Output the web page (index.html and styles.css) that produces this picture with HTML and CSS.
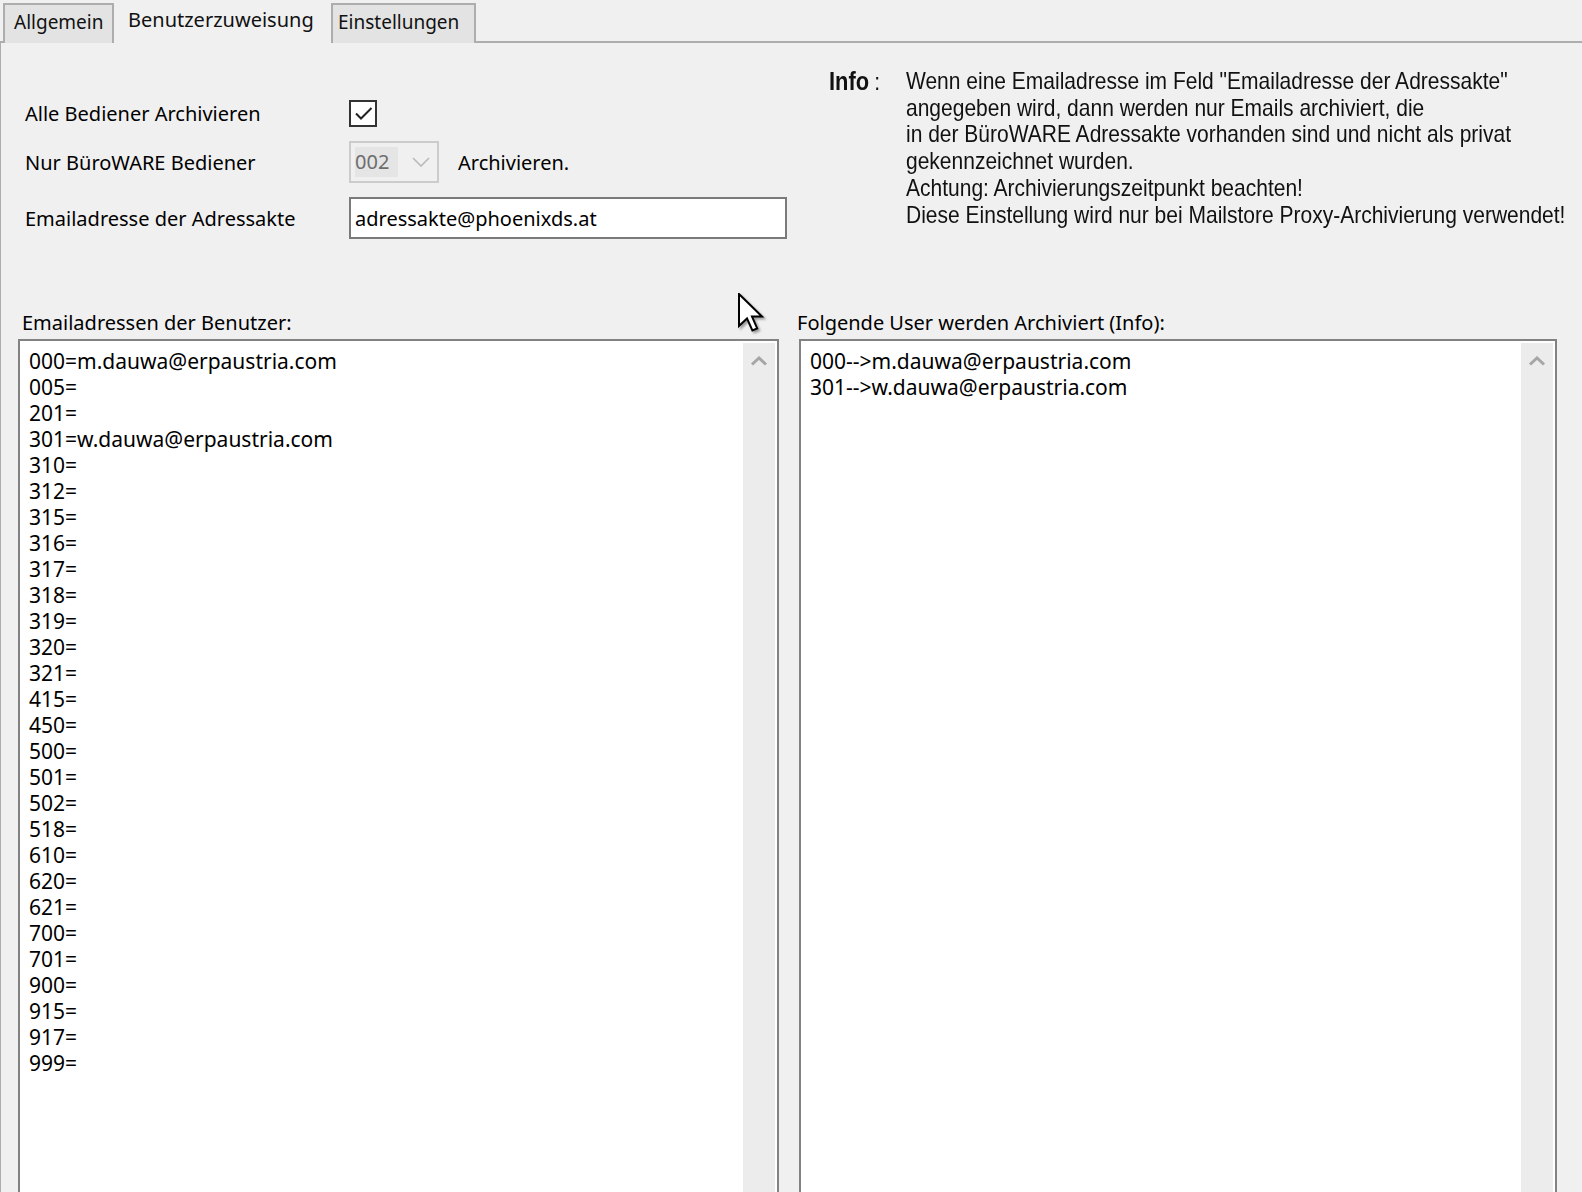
FILE: index.html
```html
<!DOCTYPE html>
<html lang="de">
<head>
<meta charset="utf-8">
<title>Benutzerzuweisung</title>
<link rel="stylesheet" href="styles.css">
</head>
<body>
<div class="tabs">
  <div class="tab tab-first">Allgemein</div>
  <div class="tab tab-active">Benutzerzuweisung</div>
  <div class="tab tab-last">Einstellungen</div>
</div>
<div class="panel">
  <div class="top">
    <div class="form">
      <div class="row">
        <span class="label">Alle Bediener Archivieren</span>
        <span class="check">
          <svg width="23" height="23" viewBox="0 0 23 23"><path d="M4 11.5 L9 16.5 L19.5 6" fill="none" stroke="#222" stroke-width="2"/></svg>
        </span>
      </div>
      <div class="row row-combo">
        <span class="label">Nur BüroWARE Bediener</span>
        <span class="combo">
          <span class="combo-val">002</span>
          <svg class="combo-arrow" width="18" height="10" viewBox="0 0 18 10"><path d="M1 1 L9 9 L17 1" fill="none" stroke="#b9b9b9" stroke-width="1.6"/></svg>
        </span>
        <span class="after">Archivieren.</span>
      </div>
      <div class="row row-input">
        <span class="label">Emailadresse der Adressakte</span>
        <span class="input">adressakte@phoenixds.at</span>
      </div>
    </div>
    <div class="info">
      <div class="info-head"><b>Info</b><span class="colon">:</span></div>
      <div class="info-text">Wenn eine Emailadresse im Feld "Emailadresse der Adressakte"<br>angegeben wird, dann werden nur Emails archiviert, die<br>in der BüroWARE Adressakte vorhanden sind und nicht als privat<br>gekennzeichnet wurden.<br>Achtung: Archivierungszeitpunkt beachten!<br>Diese Einstellung wird nur bei Mailstore Proxy-Archivierung verwendet!</div>
    </div>
  </div>
  <div class="lists">
    <div class="col col-left">
      <div class="list-label">Emailadressen der Benutzer:</div>
      <div class="listbox">
        <div class="list-text">000=m.dauwa@erpaustria.com<br>005=<br>201=<br>301=w.dauwa@erpaustria.com<br>310=<br>312=<br>315=<br>316=<br>317=<br>318=<br>319=<br>320=<br>321=<br>415=<br>450=<br>500=<br>501=<br>502=<br>518=<br>610=<br>620=<br>621=<br>700=<br>701=<br>900=<br>915=<br>917=<br>999=</div>
        <div class="scroll"><svg width="18" height="10" viewBox="0 0 18 10"><path d="M2 8.5 L9 2 L16 8.5" fill="none" stroke="#a6a6a6" stroke-width="3"/></svg></div>
      </div>
    </div>
    <div class="col col-right">
      <div class="list-label">Folgende User werden Archiviert (Info):</div>
      <div class="listbox">
        <div class="list-text">000--&gt;m.dauwa@erpaustria.com<br>301--&gt;w.dauwa@erpaustria.com</div>
        <div class="scroll"><svg width="18" height="10" viewBox="0 0 18 10"><path d="M2 8.5 L9 2 L16 8.5" fill="none" stroke="#a6a6a6" stroke-width="3"/></svg></div>
      </div>
    </div>
  </div>
</div>
<svg class="cursor" width="28" height="42" viewBox="0 0 14 21"><path d="M0.5 0.5 L0.5 16.5 L4.5 12.7 L7.2 18.7 L9.6 17.7 L7 11.8 L12 11.8 Z" fill="#fff" stroke="#000" stroke-width="1" stroke-linejoin="miter"/></svg>
</body>
</html>
```

FILE: styles.css
```css
html, body {
  margin: 0;
  padding: 0;
}
body {
  width: 1582px;
  height: 1192px;
  overflow: hidden;
  background: #f0f0f0;
  font-family: "Noto Sans", "Open Sans", sans-serif;
  font-size: 20px;
  color: #000;
  position: relative;
}
.tabs {
  display: flex;
  align-items: flex-end;
  height: 41px;
  padding-left: 3px;
  border-bottom: 2px solid #adadad;
}
.tab {
  box-sizing: border-box;
  height: 40px;
  margin-bottom: -2px;
  padding: 0 0 4px 9px;
  display: flex;
  align-items: center;
  background: #e3e3e3;
  border: 2px solid #adadad;
  border-bottom: none;
  color: #111;
  font-size: 19px;
}
.tab-first {
  width: 111px;
}
.tab-active {
  width: 217px;
  height: 43px;
  background: #f0f0f0;
  border-color: #f0f0f0;
  padding: 0 0 6px 12px;
  font-size: 20px;
}
.tab-last {
  width: 145px;
  padding-left: 5px;
}
.panel {
  border-left: 1px solid #adadad;
}
.top {
  display: flex;
  align-items: flex-start;
}
.form {
  padding-left: 24px;
  padding-top: 57px;
}
.row {
  display: flex;
  align-items: center;
}
.row-combo {
  margin-top: 14px;
}
.row-input {
  margin-top: 14px;
}
.label {
  width: 324px;
  flex: none;
}
.check {
  box-sizing: border-box;
  width: 28px;
  height: 27px;
  border: 2px solid #333;
  background: #fff;
  display: flex;
  align-items: center;
  justify-content: center;
}
.combo {
  box-sizing: border-box;
  width: 90px;
  height: 42px;
  border: 2px solid #cccccc;
  background: #f0f0f0;
  display: flex;
  align-items: center;
  padding-left: 4px;
}
.combo-val {
  background: #e5e5e5;
  color: #6d6d6d;
  width: 43px;
  height: 30px;
  line-height: 30px;
}
.combo-arrow {
  margin-left: 14px;
}
.after {
  margin-left: 19px;
}
.input {
  box-sizing: border-box;
  width: 438px;
  height: 42px;
  border: 2px solid #7a7a7a;
  background: #fff;
  padding-left: 4px;
  display: flex;
  align-items: center;
}
.info {
  display: flex;
  flex: none;
  margin-left: 42px;
  margin-top: 25px;
  font-family: "Liberation Sans", Arial, sans-serif;
  font-size: 24px;
  line-height: 26.7px;
  color: #111;
  white-space: nowrap;
  transform: scaleX(0.875);
  transform-origin: 0 0;
}
.info-head {
  width: 88px;
  flex: none;
}
.info-head b {
  font-size: 25px;
}
.colon {
  margin-left: 6px;
}
.lists {
  display: grid;
  grid-template-columns: 761px 758px;
  column-gap: 20px;
  padding-left: 17px;
  margin-top: 71px;
}
.list-label {
  line-height: 26px;
  margin-bottom: 3px;
}
.col-left .list-label {
  padding-left: 4px;
}
.col-right .list-label {
  margin-left: -2px;
}
.listbox {
  box-sizing: border-box;
  height: 900px;
  border: 2px solid #828282;
  background: #fff;
  display: flex;
}
.list-text {
  flex: 1;
  padding: 7px 0 0 9px;
  font-size: 21px;
  line-height: 26px;
}
.scroll {
  width: 32px;
  margin: 2px 2px 0 0;
  background: #ececec;
  display: flex;
  justify-content: center;
  padding-top: 13px;
  box-sizing: border-box;
}
.scroll svg {
  display: block;
}
.cursor {
  position: absolute;
  left: 738px;
  top: 293px;
  filter: drop-shadow(2px 2px 1px rgba(0,0,0,0.35));
}
```
